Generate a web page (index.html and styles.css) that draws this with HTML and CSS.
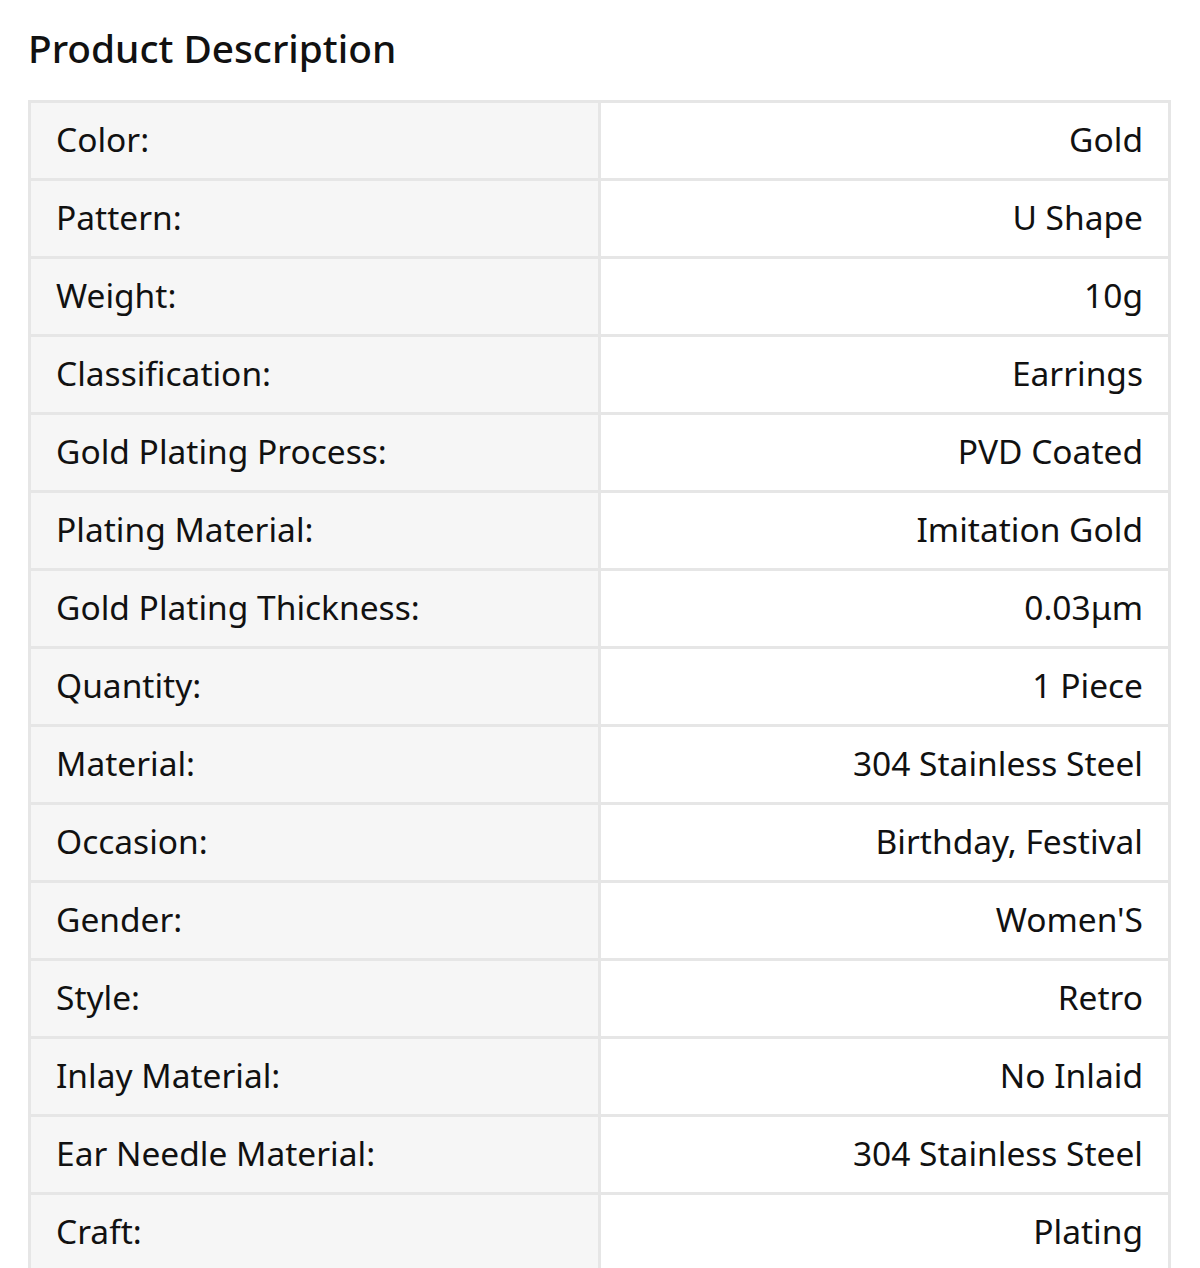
FILE: index.html
```html
<!DOCTYPE html>
<html>
<head>
<meta charset="utf-8">
<link rel="stylesheet" href="styles.css">
</head>
<body>
<div class="page">
  <h2 class="title">Product Description</h2>
  <table class="specs">
    <tbody>
      <tr><td class="label">Color:</td><td class="value">Gold</td></tr>
      <tr><td class="label">Pattern:</td><td class="value">U Shape</td></tr>
      <tr><td class="label">Weight:</td><td class="value">10g</td></tr>
      <tr><td class="label">Classification:</td><td class="value">Earrings</td></tr>
      <tr><td class="label">Gold Plating Process:</td><td class="value">PVD Coated</td></tr>
      <tr><td class="label">Plating Material:</td><td class="value">Imitation Gold</td></tr>
      <tr><td class="label">Gold Plating Thickness:</td><td class="value">0.03μm</td></tr>
      <tr><td class="label">Quantity:</td><td class="value">1 Piece</td></tr>
      <tr><td class="label">Material:</td><td class="value">304 Stainless Steel</td></tr>
      <tr><td class="label">Occasion:</td><td class="value">Birthday, Festival</td></tr>
      <tr><td class="label">Gender:</td><td class="value">Women'S</td></tr>
      <tr><td class="label">Style:</td><td class="value">Retro</td></tr>
      <tr><td class="label">Inlay Material:</td><td class="value">No Inlaid</td></tr>
      <tr><td class="label">Ear Needle Material:</td><td class="value">304 Stainless Steel</td></tr>
      <tr><td class="label">Craft:</td><td class="value">Plating</td></tr>
    </tbody>
  </table>
</div>
</body>
</html>
```
FILE: styles.css
```css
html, body {
  margin: 0;
  padding: 0;
  background: #ffffff;
}
body {
  font-family: "Noto Sans", "Liberation Sans", sans-serif;
  color: #111111;
}
.page {
  padding: 0 29px 0 28px;
}
.title {
  margin: 0;
  padding-top: 24px;
  height: 100px;
  box-sizing: border-box;
  font-size: 38.8px;
  line-height: 48px;
  font-weight: 500;
  color: #111;
}
.specs {
  width: 100%;
  border-collapse: collapse;
  table-layout: fixed;
}
.specs td {
  border: 3px solid #e6e6e6;
  height: 72px;
  padding: 0 25px 3px;
  font-size: 33.5px;
  line-height: 44px;
  vertical-align: middle;
}
.specs .label {
  width: 517px;
  background: #f6f6f6;
  text-align: left;
}
.specs .value {
  background: #ffffff;
  text-align: right;
}
```
